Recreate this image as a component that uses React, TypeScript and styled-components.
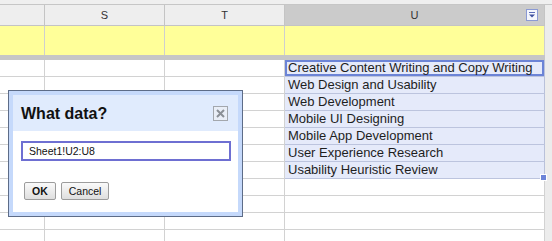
import React from "react";
import styled, { createGlobalStyle } from "styled-components";

const Global = createGlobalStyle`
  html, body { margin: 0; padding: 0; background: #ffffff; overflow: hidden; }
  body { font-family: "Liberation Sans", Arial, sans-serif; }
`;

const COLS = "45px 120px 120px 260px 1fr";

const Sheet = styled.div`
  position: relative;
  width: 552px;
  height: 241px;
  overflow: hidden;
  display: flex;
  flex-direction: column;
  background: #ffffff;
`;

const TopStrip = styled.div`
  height: 4px;
  flex: none;
  background: #efefef;
  border-bottom: 1px solid #c6c6c6;
`;

const Row = styled.div<{ $h: number }>`
  display: grid;
  grid-template-columns: ${COLS};
  height: ${(p) => p.$h}px;
  flex: none;
`;

const HeadCell = styled.div<{ $sel?: boolean }>`
  background: ${(p) => (p.$sel ? "#cbcbcb" : "#eeeeee")};
  border-right: 1px solid #c4c4c4;
  border-bottom: 1px solid #c4c4c4;
  display: flex;
  align-items: center;
  justify-content: center;
  position: relative;
  font-size: 11px;
  color: #333;
`;

const Gutter = styled.div`
  background: #ececec;
`;

const FrozenCell = styled.div`
  background: #ffff99;
  border-right: 1px solid #cfcfcf;
`;

const FreezeBar = styled.div`
  height: 5px;
  flex: none;
  background: #c6c6c6;
  border-right: 7px solid #ececec;
`;

const Cell = styled.div<{ $sel?: boolean; $active?: boolean }>`
  background: ${(p) => (p.$sel ? "#e5eafa" : "#ffffff")};
  border-right: 1px solid ${(p) => (p.$sel ? "#b9c1da" : "#d2d2d2")};
  border-bottom: 1px solid ${(p) => (p.$sel ? "#bcc4de" : "#d2d2d2")};
  font-size: 13px;
  line-height: 16px;
  color: #1e1e1e;
  padding-left: 3px;
  white-space: nowrap;
  overflow: hidden;
  box-shadow: ${(p) => (p.$active ? "inset 0 0 0 2px #6c84d6" : "none")};
`;

const DropButton = styled.div`
  position: absolute;
  right: 6px;
  top: 4px;
  width: 10px;
  height: 10px;
  border: 1px solid #8b9ad4;
  background: #f4f6fd;
  display: flex;
  align-items: center;
  justify-content: center;
`;

const FillHandle = styled.div`
  position: absolute;
  left: 540px;
  top: 174px;
  width: 5px;
  height: 5px;
  background: #6d84d8;
  border: 1px solid #ffffff;
`;

const Dialog = styled.div`
  position: absolute;
  left: 8px;
  top: 90px;
  width: 225px;
  border: 1px solid #5d6c88;
  background: #c5d9fb;
  padding: 4px;
  display: flex;
  flex-direction: column;
`;

const TitleBar = styled.div`
  height: 36px;
  background: #e0ebfd;
  display: flex;
  align-items: center;
  justify-content: space-between;
  padding: 0 10px 0 8px;
`;

const Title = styled.div`
  font-size: 16px;
  font-weight: bold;
  color: #111;
  margin-top: 2px;
`;

const CloseBox = styled.div`
  width: 15px;
  height: 15px;
  box-sizing: border-box;
  border: 1px solid #a3a7ad;
  background: #e9eef7;
  display: flex;
  align-items: center;
  justify-content: center;
`;

const Body = styled.div`
  height: 81px;
  box-sizing: border-box;
  background: #ffffff;
  padding: 10px 7px 0 8px;
  display: flex;
  flex-direction: column;
`;

const Input = styled.div`
  width: 210px;
  height: 20px;
  box-sizing: border-box;
  border: 2px solid #6e6fd2;
  font-size: 10.5px;
  line-height: 16px;
  color: #111;
  padding-left: 6px;
`;

const Buttons = styled.div`
  display: flex;
  gap: 5px;
  margin-top: 21px;
  padding-left: 3px;
`;

const Btn = styled.div<{ $bold?: boolean }>`
  height: 18px;
  box-sizing: border-box;
  padding: 0 7px;
  border: 1px solid #9c9c9c;
  border-radius: 2px;
  background: linear-gradient(#fafafa, #dedede);
  font-size: 10.5px;
  line-height: 16px;
  font-weight: ${(p) => (p.$bold ? "bold" : "normal")};
  color: #111;
`;

const items = [
  "Creative Content Writing and Copy Writing",
  "Web Design and Usability",
  "Web Development",
  "Mobile UI Designing",
  "Mobile App Development",
  "User Experience Research",
  "Usability Heuristic Review",
];

export default function App() {
  const rows = Array.from({ length: 11 }, (_, i) => i);
  return (
    <>
      <Global />
      <Sheet>
        <TopStrip />
        <Row $h={21}>
          <HeadCell />
          <HeadCell>S</HeadCell>
          <HeadCell>T</HeadCell>
          <HeadCell $sel>
            U
            <DropButton>
              <svg width="8" height="8" viewBox="0 0 8 8">
                <rect x="1" y="1" width="6" height="1" fill="#5a6cb8" />
                <path d="M1 3.5 L7 3.5 L4 6.5 Z" fill="#3f51a0" />
              </svg>
            </DropButton>
          </HeadCell>
          <Gutter />
        </Row>
        <Row $h={29}>
          <FrozenCell />
          <FrozenCell />
          <FrozenCell />
          <FrozenCell />
          <Gutter />
        </Row>
        <FreezeBar />
        {rows.map((i) => (
          <Row key={i} $h={17}>
            <Cell />
            <Cell />
            <Cell />
            <Cell $sel={i < items.length} $active={i === 0}>
              {items[i] ?? ""}
            </Cell>
            <Gutter />
          </Row>
        ))}
        <FillHandle />
        <Dialog>
          <TitleBar>
            <Title>What data?</Title>
            <CloseBox>
              <svg width="11" height="11" viewBox="0 0 11 11">
                <path d="M2 2 L9 9 M9 2 L2 9" stroke="#8a8f96" strokeWidth="2" />
              </svg>
            </CloseBox>
          </TitleBar>
          <Body>
            <Input>Sheet1!U2:U8</Input>
            <Buttons>
              <Btn $bold>OK</Btn>
              <Btn>Cancel</Btn>
            </Buttons>
          </Body>
        </Dialog>
      </Sheet>
    </>
  );
}
